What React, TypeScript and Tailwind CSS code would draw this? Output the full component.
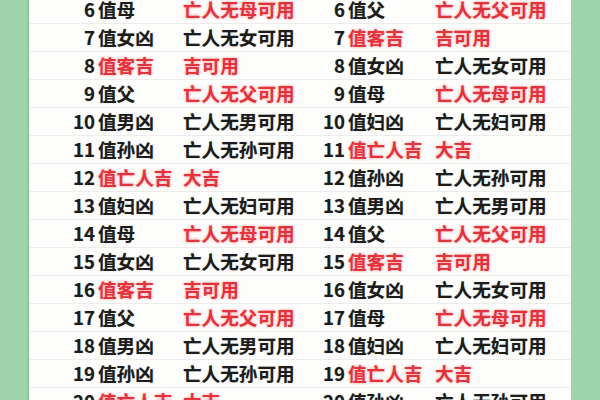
const left: [number, string, string, "none" | "res" | "both"][] = [
  [6, "值母", "亡人无母可用", "res"],
  [7, "值女凶", "亡人无女可用", "none"],
  [8, "值客吉", "吉可用", "both"],
  [9, "值父", "亡人无父可用", "res"],
  [10, "值男凶", "亡人无男可用", "none"],
  [11, "值孙凶", "亡人无孙可用", "none"],
  [12, "值亡人吉", "大吉", "both"],
  [13, "值妇凶", "亡人无妇可用", "none"],
  [14, "值母", "亡人无母可用", "res"],
  [15, "值女凶", "亡人无女可用", "none"],
  [16, "值客吉", "吉可用", "both"],
  [17, "值父", "亡人无父可用", "res"],
  [18, "值男凶", "亡人无男可用", "none"],
  [19, "值孙凶", "亡人无孙可用", "none"],
  [20, "值亡人吉", "大吉", "both"],
];

const right: [number, string, string, "none" | "res" | "both"][] = [
  [6, "值父", "亡人无父可用", "res"],
  [7, "值客吉", "吉可用", "both"],
  [8, "值女凶", "亡人无女可用", "none"],
  [9, "值母", "亡人无母可用", "res"],
  [10, "值妇凶", "亡人无妇可用", "none"],
  [11, "值亡人吉", "大吉", "both"],
  [12, "值孙凶", "亡人无孙可用", "none"],
  [13, "值男凶", "亡人无男可用", "none"],
  [14, "值父", "亡人无父可用", "res"],
  [15, "值客吉", "吉可用", "both"],
  [16, "值女凶", "亡人无女可用", "none"],
  [17, "值母", "亡人无母可用", "res"],
  [18, "值妇凶", "亡人无妇可用", "none"],
  [19, "值亡人吉", "大吉", "both"],
  [20, "值孙凶", "亡人无孙可用", "none"],
];

const red = "text-[#e2323c] [text-shadow:0_0_3px_rgba(240,70,80,0.55)]";
const dark = "text-[#1c1c1c] [text-shadow:0_0_1px_rgba(0,0,0,0.35)]";

export default function App() {
  return (
    <div
      className="flex h-[400px] w-[600px] overflow-hidden bg-[#9ed3a9]"
      style={{ fontFamily: '"Noto Sans CJK SC", "Noto Sans", sans-serif' }}
    >
      <div className="w-[27px] shrink-0 bg-[#9fd4aa]" />
      <div className="w-[2px] shrink-0 bg-[#8cc597]" />
      <div className="flex-1 bg-[#fdfdfb] overflow-hidden">
        <div className="-mt-[4px]">
          {left.map((l, i) => {
            const r = right[i];
            return (
              <div
                key={i}
                className="grid h-[28px] grid-cols-[66px_88px_117px_45px_90px_1fr] items-center border-b border-[#ececec] text-[18.6px] font-bold leading-none"
              >
                <span className={`text-right ${dark}`}>{l[0]}</span>
                <span className={`pl-[3px] ${l[3] === "both" ? red : dark}`}>{l[1]}</span>
                <span className={l[3] === "none" ? dark : red}>{l[2]}</span>
                <span className={`text-right ${dark}`}>{r[0]}</span>
                <span className={`pl-[3px] ${r[3] === "both" ? red : dark}`}>{r[1]}</span>
                <span className={r[3] === "none" ? dark : red}>{r[2]}</span>
              </div>
            );
          })}
        </div>
      </div>
      <div className="w-[29px] shrink-0 bg-[#9ed4a9]" />
    </div>
  );
}
